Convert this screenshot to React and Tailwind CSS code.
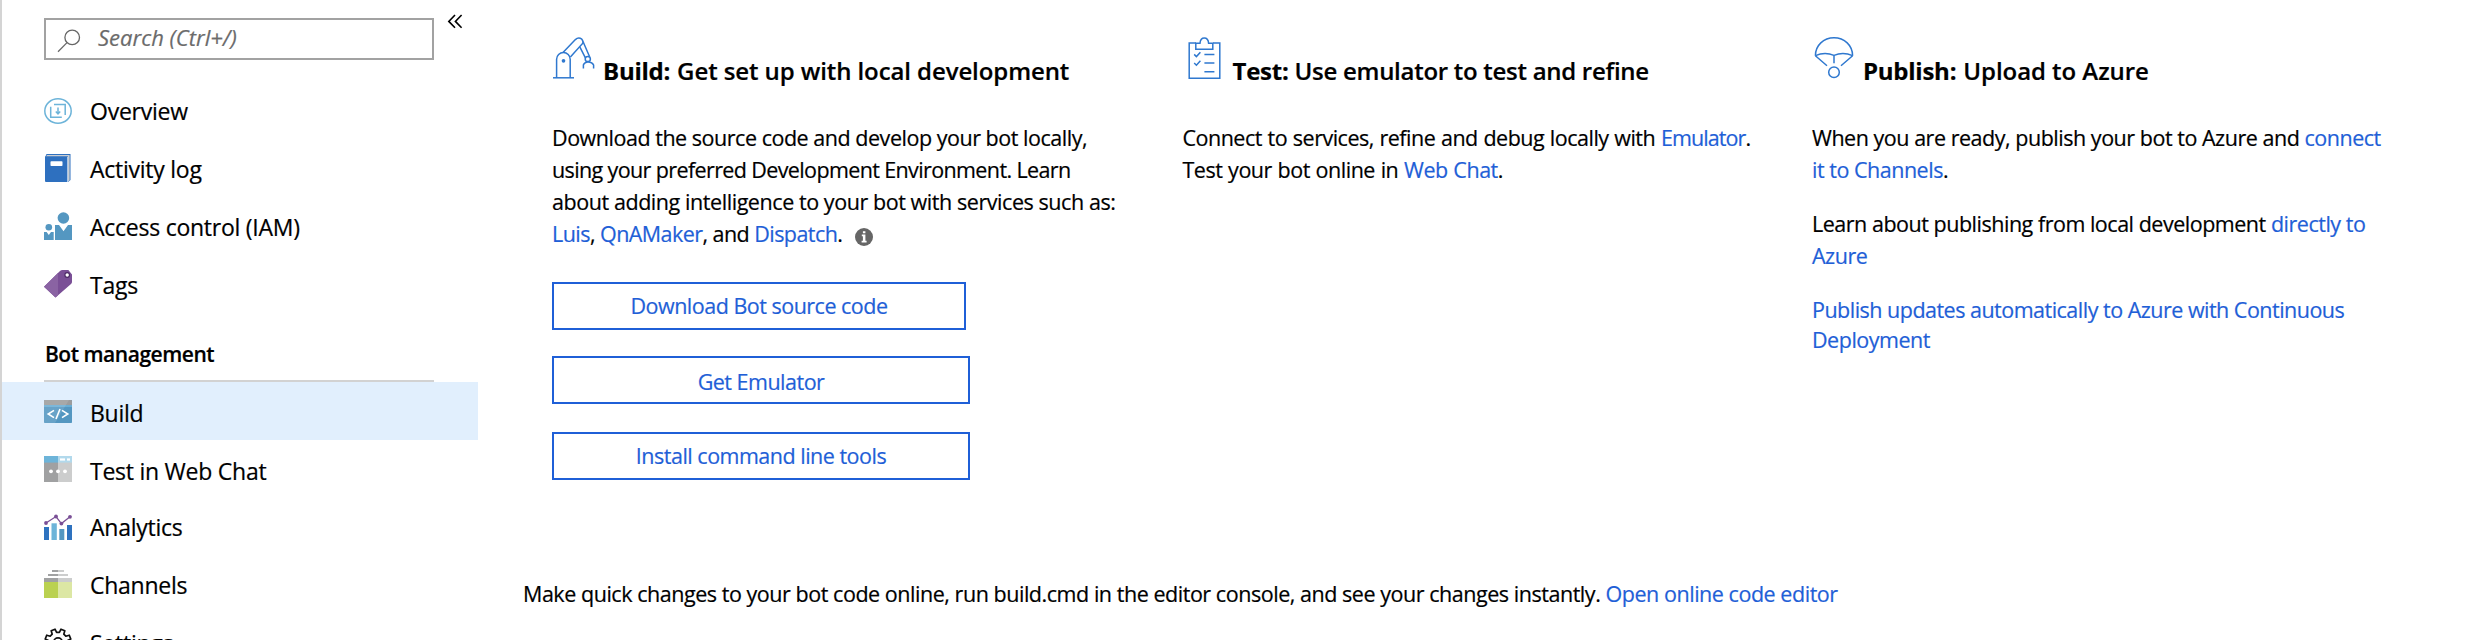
import React from "react";

const FONT = "font-['Open_Sans','Noto_Sans',sans-serif]";

function OverviewIcon() {
  return (
    <svg viewBox="0 0 28 28" className="size-7" fill="none" stroke="#6db4d9" strokeWidth="1.5">
      <ellipse cx="14" cy="14" rx="13.2" ry="12.2" />
      <path d="M10 7.5H21.2V18" />
      <path d="M6.7 9.8V20.3H17.8" />
      <path d="M14 10.5V16.5M11.8 14.6L14 17L16.2 14.6" />
    </svg>
  );
}

function ActivityIcon() {
  return (
    <svg viewBox="0 0 28 28" className="size-7">
      <path d="M2.5 0H26.5V26L24 28V3H1.2Z" fill="#2e70bf" />
      <path d="M3 1H25.6V26.2L24 27.5V2.6H2Z" fill="#c9cdd2" />
      <path d="M1 2.4H23.4V28H2Q1 28 1 27Z" fill="#2e70bf" />
      <rect x="6.5" y="7.3" width="12" height="4.7" rx="0.8" fill="#fff" />
    </svg>
  );
}

function AccessIcon() {
  return (
    <svg viewBox="0 0 28 28" className="size-7" fill="#5497c1">
      <circle cx="19.4" cy="6" r="5.8" />
      <path d="M11 13H15L19.5 19.3L24 13H28V28H11Z" />
      <circle cx="4.8" cy="15.2" r="3.3" />
      <path d="M0 20H2.6L4.8 23L7 20H9.7V28H0Z" />
    </svg>
  );
}

function TagIcon() {
  return (
    <svg viewBox="0 0 28 28" className="size-7">
      <path d="M0 16.7L16 1Q17 0 18.5 0H24.4L28 4.5V12Q28 13 27 14L11.5 27.6Z" fill="#7a4f96" />
      <path d="M0 16.7L14 3V25.3L11.5 27.6Z" fill="#8a63a3" />
      <circle cx="23.2" cy="5" r="2.3" fill="#fff" stroke="#4d2b66" strokeWidth="1.2" />
    </svg>
  );
}

function BuildIcon() {
  return (
    <svg viewBox="0 0 28 28" className="size-7">
      <rect x="0" y="4" width="28" height="23" rx="0.8" fill="#5497c1" />
      <path d="M0 9H28V4.8Q28 4 27.2 4H0.8Q0 4 0 4.8Z" fill="#9b9c9d" />
      <rect x="0" y="9" width="28" height="2" fill="#6aaed4" />
      <path d="M0 4H25L11 27H0Z" fill="#fff" opacity="0.12" />
      <path d="M10 14.3L4.2 18L10 21.7M18 14.3L23.8 18L18 21.7M16 13L12 23" fill="none" stroke="#fff" strokeWidth="1.6" />
    </svg>
  );
}

function TestIcon() {
  return (
    <svg viewBox="0 0 28 28" className="size-7">
      <rect x="0" y="2" width="14" height="7" fill="#6db4d9" />
      <rect x="14" y="2" width="14" height="7" fill="#b2d9ec" />
      <rect x="0" y="8.6" width="14" height="19.4" fill="#a0a1a2" />
      <rect x="14" y="8.6" width="14" height="19.4" fill="#cccdcd" />
      <rect x="16" y="4.4" width="5" height="2.2" fill="#fff" />
      <rect x="23" y="4.4" width="3" height="2.2" fill="#fff" />
      <g fill="#fff">
        <circle cx="7" cy="17.3" r="1.9" />
        <circle cx="14" cy="17.3" r="1.9" />
        <circle cx="21" cy="17.3" r="1.9" />
      </g>
    </svg>
  );
}

function AnalyticsIcon() {
  return (
    <svg viewBox="0 0 28 28" className="size-7">
      <rect x="0" y="15" width="5" height="13" fill="#2e72bf" />
      <rect x="7.5" y="11.3" width="5.3" height="16.7" fill="#6db4d9" />
      <rect x="15.3" y="17" width="5" height="11" fill="#5497c1" />
      <rect x="23" y="13" width="5" height="15" fill="#2e72bf" />
      <path d="M2 11L12 4.5L17.4 11.6L26 4.8" fill="none" stroke="#7a4f96" strokeWidth="1.3" />
      <g fill="#7a4f96">
        <circle cx="2" cy="11" r="1.9" />
        <circle cx="12" cy="4.5" r="1.9" />
        <circle cx="17.4" cy="11.6" r="1.9" />
        <circle cx="26" cy="4.8" r="1.9" />
      </g>
    </svg>
  );
}

function ChannelsIcon() {
  return (
    <svg viewBox="0 0 28 28" className="size-7">
      <g fill="#a0a1a2">
        <rect x="8" y="0" width="6" height="2" />
        <rect x="4" y="4" width="10" height="2" />
        <rect x="0" y="8" width="14" height="4" />
      </g>
      <g fill="#cccdcd">
        <rect x="14" y="0" width="6" height="2" />
        <rect x="14" y="4" width="10" height="2" />
        <rect x="14" y="8" width="14" height="4" />
      </g>
      <rect x="0" y="12" width="14" height="16" fill="#bad150" />
      <rect x="14" y="12" width="14" height="16" fill="#dce7a4" />
    </svg>
  );
}

function GearIcon() {
  return (
    <svg viewBox="0 0 28 28" className="size-7" fill="none" stroke="#111" strokeWidth="1.7" strokeLinejoin="round">
      <path d="M14 4.4L15.4 4.4L17 1.2L20.8 2.8L19.8 6.2L21.8 8.2L25.2 7.2L26.8 11L23.6 12.6V15.4L26.8 17L25.2 20.8L21.8 19.8L19.8 21.8L20.8 25.2L17 26.8L15.4 23.6H12.6L11 26.8L7.2 25.2L8.2 21.8L6.2 19.8L2.8 20.8L1.2 17L4.4 15.4V12.6L1.2 11L2.8 7.2L6.2 8.2L8.2 6.2L7.2 2.8L11 1.2L12.6 4.4Z" />
      <circle cx="14" cy="14" r="4.2" />
    </svg>
  );
}

function RobotArmIcon() {
  return (
    <svg viewBox="0 0 50 42" className="h-[42px] w-[50px] shrink-0" fill="none" stroke="#2f78cf" strokeWidth="1.5">
      <path d="M1 40.8H22" />
      <path d="M4.6 40.8V22.3A6.8 6.8 0 0 1 18.2 22.3V40.8" />
      <circle cx="11.5" cy="23.8" r="1.1" fill="#2f78cf" />
      <path d="M11 15.6L23.4 2.6Q26.5 -0.4 29.8 2.2Q31.4 4 30.8 6.2L18.4 20" />
      <path d="M31 4.5L37.6 19.8M27.8 9.8L33.4 20.8" />
      <circle cx="35.8" cy="22" r="2.6" />
      <path d="M31.4 31.5V27.8Q32.4 25.4 36 24.8Q40.4 25.6 41.6 28V31.5" />
    </svg>
  );
}

function ClipboardIcon() {
  return (
    <svg viewBox="0 0 50 42" className="h-[42px] w-[50px] shrink-0" fill="none" stroke="#2f78cf" strokeWidth="1.5">
      <path d="M13 6H6.2V41.2H36.8V6H30" />
      <path d="M12.8 6.2H17Q17.4 0.9 21.3 0.9Q25.2 0.9 25.6 6.2H29.8V12.3H12.8Z" />
      <path d="M11.2 17.4L13.4 19.6L17.4 15.2M11.2 26L13.4 28.2L17.4 23.8" />
      <path d="M21.4 17.4H31.4M21.4 26H31.4M21.4 34.8H31.4" />
    </svg>
  );
}

function ParachuteIcon() {
  return (
    <svg viewBox="0 0 50 42" className="h-[42px] w-[50px] shrink-0" fill="none" stroke="#2f78cf" strokeWidth="1.5">
      <path d="M2.4 18.8C2.4 8.4 10.6 0.8 21 0.8S39.6 8.4 39.6 18.8" />
      <path d="M2.4 18.6Q12 14.6 21 18.4Q30 14.6 39.6 18.6" />
      <path d="M21 18.4V26.2M2.4 18.8L14 28.8M39.6 18.8L28 28.8" />
      <circle cx="21" cy="35.3" r="5.3" />
    </svg>
  );
}

function NavItem({ icon, label, row = "h-[58px]", iconTop = "mt-3.5", textTop = "" }) {
  return (
    <li className={`flex w-[476px] items-start pl-[42px] ${row}`}>
      <span className={`mr-[18px] size-7 shrink-0 ${iconTop}`}>{icon}</span>
      <a className={`self-center whitespace-nowrap text-[23px] leading-8 tracking-[-0.25px] ${textTop}`}>{label}</a>
    </li>
  );
}

function Link({ children }) {
  return <a className="text-[#1f5fd7]">{children}</a>;
}

function Line({ children, track = "tracking-[-0.48px]" }) {
  return <span className={`block whitespace-nowrap ${track}`}>{children}</span>;
}

function Heading({ icon, name, text, track, nameTrack }) {
  return (
    <h2 className="flex h-[50px] items-start whitespace-nowrap text-[24px] leading-8">
      {icon}
      <span className={`mt-[18px] font-bold ${nameTrack}`}>{name}</span>
      <span className={`mt-[18px] ml-[7px] font-semibold ${track}`}>{text}</span>
    </h2>
  );
}

function OutlineButton({ children, className }) {
  return (
    <button
      className={`flex h-12 items-center justify-center border-2 border-[#1f5fd7] text-[21.5px] leading-8 tracking-[-0.5px] text-[#1f5fd7] ${className}`}
    >
      {children}
    </button>
  );
}

export default function App() {
  return (
    <div className={`flex h-[640px] w-[2478px] overflow-hidden bg-white text-black [-webkit-text-stroke:0.2px_currentColor] ${FONT}`}>
      <aside className="h-[640px] w-[478px] shrink-0 overflow-hidden border-l-2 border-[#d4d4d4]">
        <div className="flex pt-[18px] pl-[42px]">
          <div className="flex h-[42px] w-[390px] items-start border-2 border-[#a2a2a2]">
            <svg viewBox="0 0 24 24" className="mt-[9px] ml-[11px] size-6" fill="none" stroke="#666" strokeWidth="1.3">
              <circle cx="15.2" cy="8.4" r="7.3" />
              <path d="M10 13.6L1 22.8" />
            </svg>
            <span className="mt-px ml-[17px] text-[22px] leading-8 text-[#6b6b6b] italic">Search (Ctrl+/)</span>
          </div>
          <svg viewBox="0 0 16 16" className="-mt-[4px] ml-[13px] size-4" fill="none" stroke="#000" strokeWidth="1.6">
            <path d="M8 1L1.8 7.4L8 13.8M14.6 1L8.4 7.4L14.6 13.8" />
          </svg>
        </div>
        <ul className="mt-[22px]">
          <NavItem icon={<OverviewIcon />} label="Overview" iconTop="mt-[15px]" textTop="tracking-[-0.4px]" />
          <NavItem icon={<ActivityIcon />} label="Activity log" />
          <NavItem icon={<AccessIcon />} label="Access control (IAM)" />
          <NavItem icon={<TagIcon />} label="Tags" />
        </ul>
        <h3 className="ml-[42px] h-[68px] w-[390px] border-b-2 border-[#d2d2d2] pt-[24px] pl-px text-[21px] leading-8 font-semibold tracking-[-0.47px]">
          Bot management
        </h3>
        <ul>
          <NavItem icon={<BuildIcon />} label="Build" row="h-[58px] bg-[#e1effd]" textTop="pt-[3px]" />
          <NavItem icon={<TestIcon />} label="Test in Web Chat" textTop="pt-1" />
          <NavItem icon={<AnalyticsIcon />} label="Analytics" row="h-[56px]" textTop="pt-[2px]" />
          <NavItem icon={<ChannelsIcon />} label="Channels" iconTop="mt-4" textTop="pt-1" />
          <NavItem icon={<GearIcon />} label="Settings" iconTop="mt-4" textTop="pt-1" />
        </ul>
      </aside>

      <main className="w-[2000px] pl-[45px]">
        <div className="flex h-[578px] pt-[37px] pl-[29px] text-[21.5px] leading-8">
          <section className="w-[630.5px] shrink-0">
            <Heading icon={<RobotArmIcon />} name="Build:" text="Get set up with local development" track="tracking-[-0.09px]" nameTrack="pl-px tracking-[-0.25px]" />
            <p className="mt-[35px]">
              <Line track="tracking-[-0.47px]">Download the source code and develop your bot locally,</Line>
              <Line track="tracking-[-0.62px]">using your preferred Development Environment. Learn</Line>
              <Line track="tracking-[-0.43px]">about adding intelligence to your bot with services such as:</Line>
              <Line track="tracking-[-0.55px]">
                <Link>Luis</Link>, <Link>QnAMaker</Link>, and <Link>Dispatch</Link>.
                <svg viewBox="0 0 18 18" className="ml-[13px] inline-block size-[18px] align-[-4px]">
                  <circle cx="9" cy="9" r="9" fill="#666" />
                  <path d="M7.9 3.2H10.4V5.2H7.9ZM6.8 6.6H10.4V12.8H11.6V14.4H6.6V12.8H7.9V8.2H6.8Z" fill="#fff" />
                </svg>
              </Line>
            </p>
            <OutlineButton className="mt-8 w-[414px]">Download Bot source code</OutlineButton>
            <OutlineButton className="mt-[26px] w-[418px] pt-[3px]">Get Emulator</OutlineButton>
            <OutlineButton className="mt-7 w-[418px]">Install command line tools</OutlineButton>
          </section>

          <section className="w-[630.5px] shrink-0">
            <Heading icon={<ClipboardIcon />} name="Test:" text="Use emulator to test and refine" track="-translate-x-px tracking-[-0.28px]" nameTrack="tracking-[-0.25px]" />
            <p className="mt-[35px] [word-spacing:0.6px]">
              <Line track="tracking-[-0.5px]">
                Connect to services, refine and debug locally with{" "}
                <span className="tracking-[-0.9px]">
                  <Link>Emulator</Link>.
                </span>
              </Line>
              <Line track="tracking-[-0.48px]">
                Test your bot online in <Link>Web Chat</Link>.
              </Line>
            </p>
          </section>

          <section className="w-[600px] shrink-0">
            <Heading icon={<ParachuteIcon />} name="Publish:" text="Upload to Azure" track="tracking-[-0.05px]" nameTrack="tracking-[-0.25px]" />
            <p className="mt-[35px] -ml-px">
              <Line track="tracking-[-0.47px]">
                When you are ready, publish your bot to Azure and <Link>connect</Link>
              </Line>
              <Line>
                <Link>it to Channels</Link>.
              </Line>
            </p>
            <p className="mt-[22px] -ml-px">
              <Line>
                Learn about publishing from local development <Link>directly to</Link>
              </Line>
              <Line>
                <Link>Azure</Link>
              </Line>
            </p>
            <p className="mt-[23px] -ml-px leading-[30px]">
              <Line track="tracking-[-0.51px]">
                <Link>Publish updates automatically to Azure with Continuous</Link>
              </Line>
              <Line>
                <Link>Deployment</Link>
              </Line>
            </p>
          </section>
        </div>
        <p className="text-[21.5px] leading-8 whitespace-nowrap tracking-[-0.455px]">
          Make quick changes to your bot code online, run build.cmd in the editor console, and see your changes instantly.{" "}
          <Link>Open online code editor</Link>
        </p>
      </main>
    </div>
  );
}
